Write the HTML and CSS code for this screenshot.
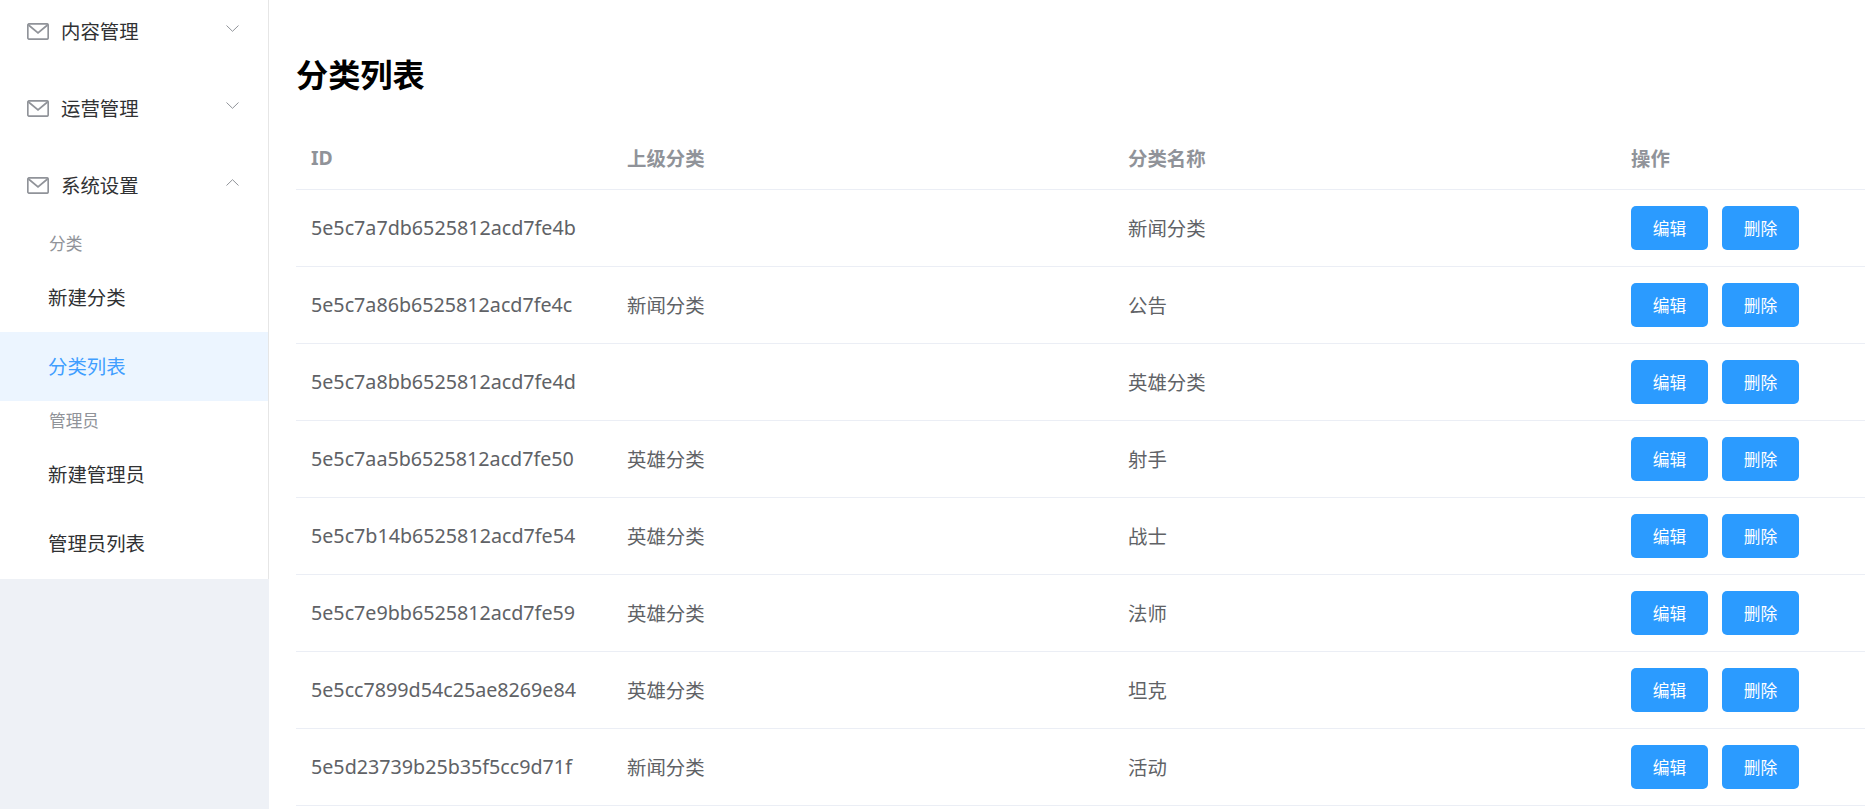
FILE: index.html
```html
<!DOCTYPE html>
<html>
<head>
    <title>分类列表</title>
    <link rel="stylesheet" href="styles.css">
</head>
<body>
    <div class="app">
        <aside class="aside">
            <ul class="menu">
                <li class="menu-title">
                    <svg class="mail" viewBox="0 0 22 17"><rect x="0.8" y="0.8" width="20.4" height="15.4" rx="1.5"/><polyline points="1.5,2 11,10 20.5,2"/></svg>
                    <span>内容管理</span>
                    <svg class="arrow" viewBox="0 0 13 7"><polyline points="0.5,0.5 6.5,6.3 12.5,0.5"/></svg>
                </li>
                <li class="menu-title">
                    <svg class="mail" viewBox="0 0 22 17"><rect x="0.8" y="0.8" width="20.4" height="15.4" rx="1.5"/><polyline points="1.5,2 11,10 20.5,2"/></svg>
                    <span>运营管理</span>
                    <svg class="arrow" viewBox="0 0 13 7"><polyline points="0.5,0.5 6.5,6.3 12.5,0.5"/></svg>
                </li>
                <li class="menu-title">
                    <svg class="mail" viewBox="0 0 22 17"><rect x="0.8" y="0.8" width="20.4" height="15.4" rx="1.5"/><polyline points="1.5,2 11,10 20.5,2"/></svg>
                    <span>系统设置</span>
                    <svg class="arrow" viewBox="0 0 13 7"><polyline points="0.5,6.5 6.5,0.7 12.5,6.5"/></svg>
                </li>
                <li class="menu-group">分类</li>
                <li class="menu-item">新建分类</li>
                <li class="menu-item active">分类列表</li>
                <li class="menu-group">管理员</li>
                <li class="menu-item">新建管理员</li>
                <li class="menu-item">管理员列表</li>
            </ul>
        </aside>
        <main class="main">
            <h1>分类列表</h1>
            <table class="table">
                <thead>
                    <tr><th class="col-id">ID</th><th class="col-parent">上级分类</th><th class="col-name">分类名称</th><th>操作</th></tr>
                </thead>
                <tbody>
                    <tr><td>5e5c7a7db6525812acd7fe4b</td><td></td><td>新闻分类</td><td><button>编辑</button><button>删除</button></td></tr>
                    <tr><td>5e5c7a86b6525812acd7fe4c</td><td>新闻分类</td><td>公告</td><td><button>编辑</button><button>删除</button></td></tr>
                    <tr><td>5e5c7a8bb6525812acd7fe4d</td><td></td><td>英雄分类</td><td><button>编辑</button><button>删除</button></td></tr>
                    <tr><td>5e5c7aa5b6525812acd7fe50</td><td>英雄分类</td><td>射手</td><td><button>编辑</button><button>删除</button></td></tr>
                    <tr><td>5e5c7b14b6525812acd7fe54</td><td>英雄分类</td><td>战士</td><td><button>编辑</button><button>删除</button></td></tr>
                    <tr><td>5e5c7e9bb6525812acd7fe59</td><td>英雄分类</td><td>法师</td><td><button>编辑</button><button>删除</button></td></tr>
                    <tr><td>5e5cc7899d54c25ae8269e84</td><td>英雄分类</td><td>坦克</td><td><button>编辑</button><button>删除</button></td></tr>
                    <tr><td>5e5d23739b25b35f5cc9d71f</td><td>新闻分类</td><td>活动</td><td><button>编辑</button><button>删除</button></td></tr>
                </tbody>
            </table>
        </main>
    </div>
</body>
</html>
```

FILE: styles.css
```css
html, body {
    margin: 0;
    padding: 0;
    height: 100%;
    overflow: hidden;
    background: #fff;
    font-family: "Noto Sans", "Noto Sans CJK SC", sans-serif;
}

.app {
    display: flex;
    height: 100vh;
}

/* sidebar */
.aside {
    width: 269px;
    flex: none;
    background: #eef1f6;
    overflow: hidden;
}
.menu {
    list-style: none;
    margin: -7px 0 0;
    padding: 0;
    background: #fff;
    border-right: 1px solid #e6e6e6;
}
.menu-title {
    display: flex;
    align-items: center;
    height: 77px;
    padding: 0 27px;
    font-size: 19.4px;
    color: #303133;
}
.menu-title span {
    position: relative;
    top: -1px;
}
.mail {
    width: 22px;
    height: 17px;
    margin-right: 12px;
    fill: none;
    stroke: #909399;
    stroke-width: 1.7;
}
.arrow {
    width: 13px;
    height: 7px;
    margin-left: auto;
    margin-right: 2px;
    position: relative;
    top: -3px;
    fill: none;
    stroke: #909399;
    stroke-width: 1;
}
.menu-group {
    height: 39px;
    line-height: 39px;
    padding-left: 49px;
    font-size: 16.7px;
    color: #909399;
}
.menu-item {
    height: 69px;
    line-height: 69px;
    padding-left: 48px;
    font-size: 19.4px;
    color: #303133;
}
.menu-item:last-child {
    height: 70px;
}
.menu-item.active {
    background: #ecf5ff;
    color: #409eff;
}

/* content */
.main {
    flex: 1;
    min-width: 0;
    padding: 53px 0 0 27px;
}
h1 {
    margin: 0 0 30px;
    font-size: 32.2px;
    line-height: 44px;
    font-weight: 700;
    color: #000;
}
.table {
    width: 1569px;
    table-layout: fixed;
    border-collapse: collapse;
    font-size: 19.4px;
    color: #606266;
}
.col-id { width: 317px; }
.col-parent { width: 501px; }
.col-name { width: 503px; }
th, td {
    box-sizing: border-box;
    padding: 0 14px;
    border-bottom: 1px solid #ebeef5;
    white-space: nowrap;
}
th {
    height: 62px;
    text-align: left;
    font-weight: 700;
    color: #909399;
}
td {
    height: 77px;
}
th:first-child, td:first-child {
    padding-left: 15px;
}
td:first-child {
    font-size: 19.7px;
}
button {
    width: 77px;
    height: 44px;
    margin-right: 14px;
    padding: 0;
    border: none;
    border-radius: 5px;
    background: #2b9bff;
    color: #fff;
    font-family: inherit;
    font-size: 16.7px;
    vertical-align: middle;
}
```
